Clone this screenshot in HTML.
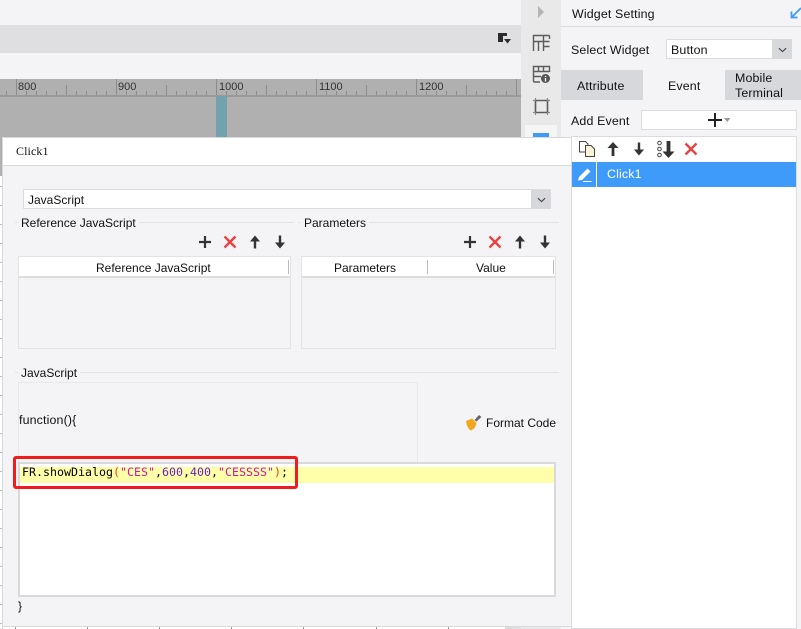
<!DOCTYPE html>
<html lang="en">
<head>
<meta charset="utf-8">
<title>Widget Setting</title>
<style>
html,body{margin:0;padding:0;width:801px;height:629px;overflow:hidden;background:#fff}
body{position:relative;font-family:"Liberation Sans","Noto Sans CJK SC",sans-serif;font-size:12px;color:#111}
.a{position:absolute;box-sizing:border-box}
.t{position:absolute;white-space:nowrap;line-height:16px;margin-top:1px}
.r{font-size:12.4px;letter-spacing:.15px}
svg{position:absolute;overflow:visible}
.ruler span{position:absolute;top:1px;font-size:11px;line-height:14px;color:#333}
.code{font-family:"DejaVu Sans Mono","Liberation Mono",monospace;font-size:11.63px;line-height:16px;position:absolute;white-space:pre;color:#000}
</style>
</head>
<body>
<svg width="0" height="0" style="position:absolute">
<defs>
<symbol id="plus" viewBox="0 0 14 14"><path d="M7 1V13M1 7H13" stroke="#333" stroke-width="2.2" fill="none"/></symbol>
<symbol id="x" viewBox="0 0 14 14"><path d="M1.5 1.5L12.5 12.5M12.5 1.5L1.5 12.5" stroke="#ee3f3f" stroke-width="2.3" fill="none"/></symbol>
<symbol id="up" viewBox="0 0 14 14"><path d="M7 .5L12 6.5H8.2V13.5H5.8V6.5H2Z" fill="#333"/></symbol>
<symbol id="down" viewBox="0 0 14 14"><path d="M7 13.5L2 7.5H5.8V.5H8.2V7.5H12Z" fill="#333"/></symbol>
<symbol id="chev" viewBox="0 0 10 6"><path d="M1 1L5 4.8L9 1" stroke="#444" stroke-width="1.2" fill="none"/></symbol>
</defs>
</svg>

<!-- background design area -->
<div class="a" style="left:0;top:0;width:521px;height:79px;background:#f4f4f6"></div>
<div class="a" style="left:0;top:25px;width:521px;height:28px;background:#dfdfe1"></div>
<svg style="left:498px;top:33px" width="14" height="12"><path d="M0 0H9V3H5V9H0Z" fill="#2b2b2b"/><path d="M6 6H13L9.5 10.5Z" fill="#2b2b2b"/></svg>

<div class="a" style="left:0;top:79px;width:521px;height:97px;background:#b0b0b0"></div>
<div class="a" style="left:0;top:95px;width:521px;height:2px;background:#999"></div>
<div class="a" style="left:216px;top:96px;width:11px;height:41px;background:#72a2ae"></div>
<div class="a ruler" style="left:0;top:79px;width:521px;height:16px">
<span style="left:18px">800</span><span style="left:118px">900</span><span style="left:219px">1000</span><span style="left:319px">1100</span><span style="left:419px">1200</span>
<svg style="left:0;top:0" width="521" height="16"><path d="M16.5 0V16M116.5 0V16M216.5 0V16M316.5 0V16M416.5 0V16M516.5 0V16M66.5 6V16M166.5 6V16M266.5 6V16M366.5 6V16M466.5 6V16M26.5 12V16M36.5 12V16M46.5 12V16M56.5 12V16M76.5 12V16M86.5 12V16M96.5 12V16M106.5 12V16M126.5 12V16M136.5 12V16M146.5 12V16M156.5 12V16M176.5 12V16M186.5 12V16M196.5 12V16M206.5 12V16M226.5 12V16M236.5 12V16M246.5 12V16M256.5 12V16M276.5 12V16M286.5 12V16M296.5 12V16M306.5 12V16M326.5 12V16M336.5 12V16M346.5 12V16M356.5 12V16M376.5 12V16M386.5 12V16M396.5 12V16M406.5 12V16M426.5 12V16M436.5 12V16M446.5 12V16M456.5 12V16M476.5 12V16M486.5 12V16M496.5 12V16M506.5 12V16M6.5 12V16" stroke="#8c8c8c" stroke-width="1" fill="none"/></svg>
</div>

<!-- left ticks + bottom ticks -->
<svg style="left:0;top:176px" width="3" height="453"><path d="M0 10.5H3M0 29.5H3M0 48.5H3M0 67.5H3M0 86.5H3M0 105.5H3M0 124.5H3M0 143.5H3M0 162.5H3M0 181.5H3M0 200.5H3M0 219.5H3M0 238.5H3M0 257.5H3M0 276.5H3M0 295.5H3M0 314.5H3M0 333.5H3M0 352.5H3M0 371.5H3M0 390.5H3M0 409.5H3M0 428.5H3M0 447.5H3" stroke="#bbb"/></svg>
<div class="a" style="left:2px;top:176px;width:1px;height:453px;background:#d5d5d8"></div>
<svg style="left:0;top:626px" width="505" height="3"><path d="M15.5 0V3M87.5 0V3M159.5 0V3M231.5 0V3M303.5 0V3M376.5 0V3M448.5 0V3" stroke="#999"/></svg>
<div class="a" style="left:505px;top:626px;width:16px;height:3px;background:#ddd"></div>

<!-- vertical icon strip -->
<div class="a" style="left:521px;top:0;width:40px;height:629px;background:#e9e9ea"></div>
<svg style="left:538px;top:6px" width="8" height="12"><path d="M0 0L6 6L0 12Z" fill="#b4b4b4"/></svg>
<svg style="left:533px;top:35px" width="17" height="17"><path d="M.5 16V.5H16.5M.5 6.5H16.5M5.5 6.5V16M10.5 6.5V16M10.5 .5V6.5M10.5 11.5H16.5M16.5 .5V4" stroke="#5c5c5c" stroke-width="1.4" fill="none"/></svg>
<svg style="left:533px;top:66px" width="17" height="17"><path d="M.5 16V.5H16.5V6M.5 5.5H16.5M.5 10.5H8M.5 16H7M5.5 .5V5.5M10.5 .5V5.5" stroke="#5c5c5c" stroke-width="1.4" fill="none"/><circle cx="12.5" cy="12.5" r="4.5" fill="#555"/><path d="M12.5 10V11M12.5 12V15.5" stroke="#fff" stroke-width="1.3"/></svg>
<svg style="left:533px;top:98px" width="17" height="17"><path d="M2.5 2.5H14.5V14.5H2.5Z" stroke="#5c5c5c" stroke-width="1.6" fill="none"/><path d="M0 2.5H3M14 2.5H17M0 14.5H3M14 14.5H17M2.5 0V3M14.5 0V3M2.5 14V17M14.5 14V17" stroke="#888" stroke-width="1.2"/></svg>
<div class="a" style="left:525px;top:125px;width:32px;height:12px;background:#f5f5f6"></div>
<div class="a" style="left:533px;top:133px;width:16px;height:4px;background:#3f9bfa"></div>

<!-- right panel -->
<div class="a" style="left:561px;top:0;width:240px;height:629px;background:#f4f4f6"></div>
<div class="a" style="left:561px;top:26px;width:240px;height:1px;background:#dcdcde"></div>
<div class="t r" style="left:572px;top:5px">Widget Setting</div>
<svg style="left:790px;top:7px" width="12" height="12"><path d="M11 1L2 10M1.5 4.5V10.5H7.5" stroke="#3f9bfa" stroke-width="1.8" fill="none"/></svg>
<div class="t r" style="left:571px;top:41px">Select Widget</div>
<div class="a" style="left:666px;top:39px;width:126px;height:20px;background:#fff;border:1px solid #dcdcde"></div>
<div class="a" style="left:772px;top:39px;width:20px;height:20px;background:#d7d8dc"></div>
<svg style="left:778px;top:47px" width="9" height="6"><use href="#chev" width="9" height="6"/></svg>
<div class="t r" style="left:671px;top:41px">Button</div>

<div class="a" style="left:561px;top:70px;width:82px;height:30px;background:#d7d8dc"></div>
<div class="a" style="left:725px;top:70px;width:76px;height:30px;background:#d7d8dc"></div>
<div class="t r" style="left:577px;top:77px">Attribute</div>
<div class="t r" style="left:668px;top:77px">Event</div>
<div class="t r" style="left:735px;top:70px;line-height:15px">Mobile<br>Terminal</div>

<div class="t r" style="left:571px;top:112px">Add Event</div>
<div class="a" style="left:641px;top:110px;width:156px;height:20px;background:#fff;border:1px solid #dcdcde"></div>
<svg style="left:708px;top:113px" width="14" height="14"><path d="M7 0V14M0 7H14" stroke="#222" stroke-width="2"/></svg>
<svg style="left:724px;top:118px" width="7" height="5"><path d="M0 0H6.5L3.2 4Z" fill="#999"/></svg>

<div class="a" style="left:571px;top:136px;width:226px;height:493px;background:#fff;border:1px solid #dcdcde"></div>
<svg style="left:579px;top:141px" width="16" height="16"><path d="M.5 .5H6.5L9 3V11H.5Z" fill="#fff" stroke="#444"/><path d="M6.5 4.5H12L15.5 8V15.5H6.5Z" fill="#fbf3d9" stroke="#444"/></svg>
<svg style="left:606px;top:141px" width="14" height="16"><path d="M7 1L12.5 7H8.4V15H5.6V7H1.5Z" fill="#333"/></svg>
<svg style="left:632px;top:142px" width="14" height="14"><use href="#down" width="14" height="14"/></svg>
<svg style="left:657px;top:140px" width="18" height="18"><circle cx="2.5" cy="3" r="1.8" fill="none" stroke="#444"/><circle cx="2.5" cy="9" r="1.8" fill="none" stroke="#444"/><circle cx="2.5" cy="15" r="1.8" fill="none" stroke="#444"/><path d="M11.5 18L5.5 11.5H9.6V1H13.4V11.5H17.5Z" fill="#333"/></svg>
<svg style="left:684px;top:142px" width="14" height="14"><use href="#x" width="14" height="14"/></svg>

<div class="a" style="left:572px;top:162px;width:224px;height:25px;background:#3f9bfa"></div>
<div class="a" style="left:596px;top:162px;width:1px;height:25px;background:#fff"></div>
<svg style="left:577px;top:166px" width="16" height="16"><path d="M2 11L10.5 2.5L13.5 5.5L5 14L1 14.5Z" fill="#fff"/><path d="M6 15.5H14.5" stroke="#fff"/></svg>
<div class="t r" style="left:607px;top:165px;color:#fff">Click1</div>

<!-- dialog -->
<div class="a" style="left:2px;top:137px;width:570px;height:490px;background:#f4f4f6;border:1px solid #d9d9dc"></div>
<div class="a" style="left:3px;top:138px;width:568px;height:28px;background:#fff;border-bottom:1px solid #d9d9dc"></div>
<div class="t" style="left:16px;top:142px;font-family:'Liberation Serif',serif;font-size:12px;letter-spacing:.1px">Click1</div>

<div class="a" style="left:23px;top:189px;width:528px;height:20px;background:#fff;border:1px solid #dcdcde"></div>
<div class="a" style="left:531px;top:190px;width:20px;height:19px;background:#d7d8dc"></div>
<svg style="left:537px;top:197px" width="9" height="6"><use href="#chev" width="9" height="6"/></svg>
<div class="t" style="left:28px;top:191px">JavaScript</div>

<!-- group lines -->
<div class="a" style="left:15px;top:222px;width:279px;height:1px;background:#e2e2e4"></div>
<div class="a" style="left:298px;top:222px;width:261px;height:1px;background:#e2e2e4"></div>
<div class="a" style="left:15px;top:372px;width:544px;height:1px;background:#e2e2e4"></div>
<div class="t" style="left:18px;top:214px;background:#f4f4f6;padding:0 3px">Reference JavaScript</div>
<div class="t" style="left:301px;top:214px;background:#f4f4f6;padding:0 3px">Parameters</div>
<div class="t" style="left:18px;top:364px;background:#f4f4f6;padding:0 3px">JavaScript</div>

<!-- tool icons -->
<svg style="left:198px;top:235px" width="14" height="14"><use href="#plus" width="14" height="14"/></svg>
<svg style="left:223px;top:235px" width="14" height="14"><use href="#x" width="14" height="14"/></svg>
<svg style="left:248px;top:235px" width="14" height="14"><use href="#up" width="14" height="14"/></svg>
<svg style="left:273px;top:235px" width="14" height="14"><use href="#down" width="14" height="14"/></svg>
<svg style="left:463px;top:235px" width="14" height="14"><use href="#plus" width="14" height="14"/></svg>
<svg style="left:488px;top:235px" width="14" height="14"><use href="#x" width="14" height="14"/></svg>
<svg style="left:513px;top:235px" width="14" height="14"><use href="#up" width="14" height="14"/></svg>
<svg style="left:538px;top:235px" width="14" height="14"><use href="#down" width="14" height="14"/></svg>

<!-- tables -->
<div class="a" style="left:18px;top:256px;width:273px;height:93px;border:1px solid #e3e3e5"></div>
<div class="a" style="left:19px;top:257px;width:271px;height:19px;background:#fff"></div>
<div class="a" style="left:19px;top:276px;width:271px;height:2px;background:#ddd"></div>
<div class="a" style="left:288px;top:260px;width:1px;height:14px;background:#bbb"></div>
<div class="t" style="left:96px;top:259px">Reference JavaScript</div>

<div class="a" style="left:301px;top:256px;width:255px;height:93px;border:1px solid #e3e3e5"></div>
<div class="a" style="left:302px;top:257px;width:253px;height:19px;background:#fff"></div>
<div class="a" style="left:302px;top:276px;width:253px;height:2px;background:#ddd"></div>
<div class="a" style="left:427px;top:260px;width:1px;height:14px;background:#bbb"></div>
<div class="a" style="left:553px;top:260px;width:1px;height:14px;background:#bbb"></div>
<div class="t" style="left:334px;top:259px">Parameters</div>
<div class="t" style="left:476px;top:259px">Value</div>

<!-- JS section -->
<div class="a" style="left:18px;top:382px;width:400px;height:81px;border:1px solid #e8e8ea"></div>
<div class="t r" style="left:19px;top:411px">function(){</div>
<svg style="left:465px;top:414px" width="17" height="17"><path d="M9.5 6L14 1L16.5 3L11.5 7.5Z" fill="#666"/><path d="M1 7L7 4.5L11.5 9C11 13 8 16 5.5 16.5C3 14.5 1.5 11 1 7Z" fill="#f2a81d"/></svg>
<div class="t" style="left:486px;top:414px">Format Code</div>

<div class="a" style="left:18px;top:462px;width:538px;height:135px;background:#fff;border:2px solid #d9d9dd"></div>
<div class="a" style="left:20px;top:467px;width:534px;height:16px;background:#ffffaa"></div>
<div class="code" style="left:22px;top:464px">FR.showDialog<span style="color:#e8401c">(</span><span style="color:#d6139c">"CES"</span>,<span style="color:#6a1fc2">600</span>,<span style="color:#6a1fc2">400</span>,<span style="color:#d6139c">"CESSSS"</span><span style="color:#e8401c">)</span>;</div>
<div class="a" style="left:13px;top:456px;width:285px;height:33px;border:3px solid #f11d1d;border-radius:3px"></div>
<div class="t" style="left:18px;top:597px">}</div>

</body>
</html>
